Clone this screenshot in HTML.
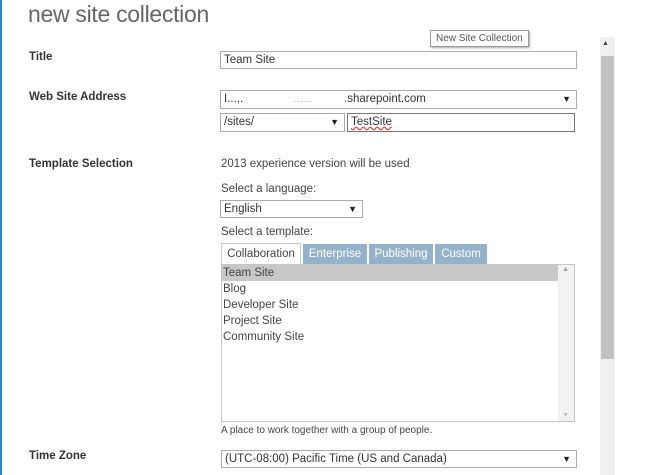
<!DOCTYPE html>
<html><head><style>
body{margin:0;width:650px;height:475px;overflow:hidden;background:#fff;font-family:"Liberation Sans",sans-serif;color:#444;position:relative}
.a{position:absolute;white-space:nowrap}
.lbl{font-weight:bold;font-size:11.5px;color:#333}
.t{font-size:11.5px;color:#444}
.box{position:absolute;border:1px solid #ababab;background:#fff;box-sizing:border-box;font-size:11.5px;color:#333;padding-left:3px}
.arr{position:absolute;right:5px;top:0px;font-size:9px;color:#222}
</style></head><body>
<div class="a" style="left:0;top:0;width:2px;height:475px;background:#2b88d8"></div>
<div class="a" style="left:28px;top:1px;font-size:23px;color:#666;letter-spacing:-0.3px">new site collection</div>
<div class="a" style="left:430px;top:30px;border:1px solid #999;background:#fff;font-size:10px;color:#555;padding:2px 5px;box-shadow:1px 1px 2px #aaa">New Site Collection</div>

<div class="a lbl" style="left:29px;top:51px">Title</div>
<div class="box" style="left:220px;top:51px;width:357px;height:18px;line-height:16px">Team Site</div>

<div class="a lbl" style="left:29px;top:91px">Web Site Address</div>
<div class="box" style="left:220px;top:90px;width:357px;height:19px;line-height:17px">I...,.&nbsp;&nbsp;&nbsp;&nbsp;&nbsp;&nbsp;&nbsp;&nbsp;&nbsp;&nbsp;&nbsp;&nbsp;&nbsp;&nbsp;&nbsp;&nbsp;<span style="color:#999;font-size:8px">........</span>&nbsp;&nbsp;&nbsp;&nbsp;&nbsp;&nbsp;&nbsp;&nbsp;&nbsp;&nbsp;.sharepoint.com<span class="arr">▼</span></div>
<div class="box" style="left:220px;top:113px;width:125px;height:19px;line-height:17px">/sites/<span class="arr">▼</span></div>
<div class="box" style="left:347px;top:113px;width:228px;height:19px;line-height:17px;border-color:#777"><span style="text-decoration:underline wavy #e04040">TestSite</span></div>

<div class="a lbl" style="left:29px;top:158px">Template Selection</div>
<div class="a t" style="left:221px;top:158px">2013 experience version will be used</div>
<div class="a t" style="left:221px;top:183px">Select a language:</div>
<div class="box" style="left:220px;top:200px;width:143px;height:18px;line-height:16px">English<span class="arr">▼</span></div>
<div class="a t" style="left:221px;top:226px">Select a template:</div>

<div class="a" style="left:221px;top:243px;width:80px;height:22px;border:1px solid #c6c6c6;border-bottom:none;background:#fff;font-size:11.5px;color:#444;text-align:center;line-height:21px;box-sizing:border-box">Collaboration</div>
<div class="a" style="left:303px;top:244px;width:64px;height:20px;background:#94b3cb;color:#fff;font-size:11.5px;text-align:center;line-height:20px">Enterprise</div>
<div class="a" style="left:369px;top:244px;width:64px;height:20px;background:#94b3cb;color:#fff;font-size:11.5px;text-align:center;line-height:20px">Publishing</div>
<div class="a" style="left:435px;top:244px;width:52px;height:20px;background:#94b3cb;color:#fff;font-size:11.5px;text-align:center;line-height:20px">Custom</div>

<div class="a" style="left:221px;top:264px;width:354px;height:158px;border:1px solid #c6c6c6;box-sizing:border-box;background:#fff">
 <div style="position:absolute;left:0;top:0;width:336px;height:16px;background:#c8c8c8"></div>
 <div style="position:absolute;right:0;top:0;width:16px;height:156px;background:#f2f2f2"></div>
 <div style="position:absolute;right:5px;top:1px;font-size:7px;color:#999">▲</div>
 <div style="position:absolute;right:5px;bottom:2px;font-size:7px;color:#bbb">▼</div>
 <div style="position:absolute;left:1px;top:0;font-size:11.5px;color:#444;line-height:16px">Team Site<br>Blog<br>Developer Site<br>Project Site<br>Community Site</div>
</div>
<div class="a" style="left:221px;top:425px;font-size:10px;color:#444">A place to work together with a group of people.</div>

<div class="a lbl" style="left:29px;top:450px">Time Zone</div>
<div class="box" style="left:221px;top:450px;width:356px;height:18px;line-height:16px">(UTC-08:00) Pacific Time (US and Canada)<span class="arr">▼</span></div>

<div class="a" style="left:600px;top:37px;width:15px;height:438px;background:#f0f0f0"></div>
<div class="a" style="left:602px;top:40px;font-size:7px;color:#444">▲</div>
<div class="a" style="left:601px;top:56px;width:13px;height:303px;background:#c2c2c2"></div>
</body></html>
